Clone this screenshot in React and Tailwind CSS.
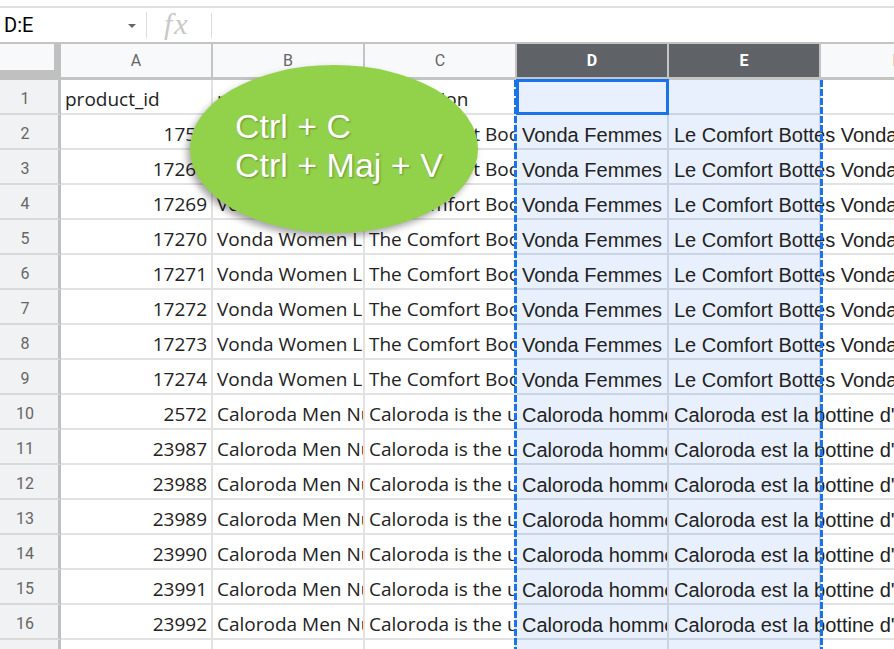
const rows = [
  ["product_id", "name", "description", "", ""],
  ["1755", "Vonda Women Leather Boots", "The Comfort Boots by Vonda", "Vonda Femmes cuir Bottes", "Le Comfort Bottes Vonda Femmes"],
  ["17268", "Vonda Women Leather Boots", "The Comfort Boots by Vonda", "Vonda Femmes cuir Bottes", "Le Comfort Bottes Vonda Femmes"],
  ["17269", "Vonda Women Leather Boots", "The Comfort Boots by Vonda", "Vonda Femmes cuir Bottes", "Le Comfort Bottes Vonda Femmes"],
  ["17270", "Vonda Women Leather Boots", "The Comfort Boots by Vonda", "Vonda Femmes cuir Bottes", "Le Comfort Bottes Vonda Femmes"],
  ["17271", "Vonda Women Leather Boots", "The Comfort Boots by Vonda", "Vonda Femmes cuir Bottes", "Le Comfort Bottes Vonda Femmes"],
  ["17272", "Vonda Women Leather Boots", "The Comfort Boots by Vonda", "Vonda Femmes cuir Bottes", "Le Comfort Bottes Vonda Femmes"],
  ["17273", "Vonda Women Leather Boots", "The Comfort Boots by Vonda", "Vonda Femmes cuir Bottes", "Le Comfort Bottes Vonda Femmes"],
  ["17274", "Vonda Women Leather Boots", "The Comfort Boots by Vonda", "Vonda Femmes cuir Bottes", "Le Comfort Bottes Vonda Femmes"],
  ["2572", "Caloroda Men Nubuck Boots", "Caloroda is the ultimate boot", "Caloroda hommes bottes", "Caloroda est la bottine d'hiver ultime"],
  ["23987", "Caloroda Men Nubuck Boots", "Caloroda is the ultimate boot", "Caloroda hommes bottes", "Caloroda est la bottine d'hiver ultime"],
  ["23988", "Caloroda Men Nubuck Boots", "Caloroda is the ultimate boot", "Caloroda hommes bottes", "Caloroda est la bottine d'hiver ultime"],
  ["23989", "Caloroda Men Nubuck Boots", "Caloroda is the ultimate boot", "Caloroda hommes bottes", "Caloroda est la bottine d'hiver ultime"],
  ["23990", "Caloroda Men Nubuck Boots", "Caloroda is the ultimate boot", "Caloroda hommes bottes", "Caloroda est la bottine d'hiver ultime"],
  ["23991", "Caloroda Men Nubuck Boots", "Caloroda is the ultimate boot", "Caloroda hommes bottes", "Caloroda est la bottine d'hiver ultime"],
  ["23992", "Caloroda Men Nubuck Boots", "Caloroda is the ultimate boot", "Caloroda hommes bottes", "Caloroda est la bottine d'hiver ultime"],
  ["", "", "", "", ""],
];

function Row({ n, cells }) {
  const numeric = /^\d+$/.test(cells[0]);
  return (
    <div className="flex h-[35px] shrink-0">
      <div className="w-[61px] shrink-0 h-full border-r-[3px] border-b-2 border-r-[#c0c0c0] border-b-[#d9d9d9] bg-[#f1f2f4] flex items-center justify-center pr-[8px] pt-[4px] text-[16px] text-[#666] font-['Roboto',sans-serif]">
        {n}
      </div>
      <div className={`w-[152px] shrink-0 h-full border-r-2 border-b-2 border-[#e2e2e2] overflow-hidden whitespace-nowrap flex items-end leading-[22px] pb-[3px] px-[4px] font-['Open_Sans',sans-serif] text-[19px] text-[#222] ${numeric ? "justify-end" : "justify-start"}`}>
        {cells[0]}
      </div>
      <div className="w-[152px] shrink-0 h-full border-r-2 border-b-2 border-[#e2e2e2] overflow-hidden whitespace-nowrap flex items-end leading-[22px] pb-[3px] px-[4px] font-['Open_Sans',sans-serif] text-[19px] text-[#222]">
        {cells[1]}
      </div>
      <div className="w-[152px] shrink-0 h-full border-r-2 border-b-2 border-[#e2e2e2] overflow-hidden whitespace-nowrap flex items-end leading-[22px] pb-[3px] px-[4px] font-['Open_Sans',sans-serif] text-[19px] text-[#222]">
        {cells[2]}
      </div>
      <div className="w-[152px] shrink-0 h-full border-r-2 border-b-2 border-[#c9d3e1] bg-[#e8f0fe] overflow-hidden whitespace-nowrap flex items-end leading-[20px] pb-[3px] pl-[5px] font-['Liberation_Sans',Arial,sans-serif] text-[20px] text-[#222]">
        {cells[3]}
      </div>
      <div className="w-[152px] shrink-0 h-full border-r-2 border-b-2 border-[#c9d3e1] bg-[#e8f0fe] overflow-visible whitespace-nowrap flex items-end leading-[20px] pb-[3px] pl-[5px] font-['Liberation_Sans',Arial,sans-serif] text-[20px] text-[#222]">
        {cells[4]}
      </div>
      <div className="w-[152px] shrink-0 h-full border-b-2 border-[#e2e2e2]" />
    </div>
  );
}

export default function App() {
  return (
    <div className="relative w-[894px] h-[649px] overflow-hidden bg-white font-['Roboto',sans-serif]">
      {/* top line */}
      <div className="h-[8px] border-b-2 border-[#e0e0e0]" />
      {/* formula bar */}
      <div className="flex items-center h-[36px] border-b-2 border-[#c4c4c4]">
        <div className="w-[146px] shrink-0 flex items-center pl-[4px] pr-[10px] text-[20px] text-black">
          <span>D:E</span>
          <span className="ml-auto w-0 h-0 border-l-[4px] border-r-[4px] border-t-[4px] border-l-transparent border-r-transparent border-t-[#666] mt-[2px]" />
        </div>
        <div className="w-px h-[26px] bg-[#dadce0] shrink-0" />
        <div className="w-[64px] shrink-0 flex items-center pl-[17px] font-['Liberation_Serif',serif] italic text-[30px] text-[#c8c8c8] tracking-[2px] leading-none pb-[2px]">
          fx
        </div>
        <div className="w-px h-[25px] bg-[#dadce0] shrink-0" />
      </div>
      {/* column headers */}
      <div className="flex h-[36px]">
        <div className="w-[61px] shrink-0 h-full bg-[#f8f9fa] border-r-[7px] border-b-[10px] border-[#c0c0c0]" />
        {["A", "B", "C"].map((c) => (
          <div key={c} className="w-[152px] shrink-0 h-full bg-[#f8f9fa] border-r-2 border-b-[3px] border-[#c4c4c4] flex items-center justify-center pt-[1px] text-[16px] text-[#666]">
            {c}
          </div>
        ))}
        {["D", "E"].map((c) => (
          <div key={c} className="w-[152px] shrink-0 h-full bg-[#5f6368] border-r-2 border-b-[3px] border-[#c4c4c4] flex items-center justify-center pt-[1px] text-[16px] font-bold text-white">
            {c}
          </div>
        ))}
        <div className="w-[152px] shrink-0 h-full bg-[#f8f9fa] border-b-[3px] border-[#c4c4c4] flex items-center justify-center pt-[1px] text-[16px] text-[#666]">
          F
        </div>
      </div>
      {/* rows */}
      <div className="flex flex-col">
        {rows.map((r, i) => (
          <Row key={i} n={i + 1} cells={r} />
        ))}
      </div>

      {/* selection dashed borders */}
      <div className="absolute left-[514px] top-[80px] w-[3px] h-[569px] [background-image:repeating-linear-gradient(to_bottom,#1a73e8_0px,#1a73e8_7px,transparent_7px,transparent_9px)]" />
      <div className="absolute left-[820px] top-[80px] w-[3px] h-[569px] [background-image:repeating-linear-gradient(to_bottom,#1a73e8_0px,#1a73e8_7px,transparent_7px,transparent_9px)]" />
      {/* active cell */}
      <div className="absolute left-[516px] top-[79px] w-[153px] h-[36px] border-[3px] border-[#1a73e8]" />

      {/* green ellipse */}
      <div className="absolute left-[190px] top-[65px] w-[288px] h-[168px] rounded-[50%] bg-[#92d14a] shadow-[-3px_4px_7px_rgba(0,0,0,0.35)] flex flex-col items-start pl-[45px] pt-[42px] font-['Liberation_Sans',Arial,sans-serif] text-[34px] leading-[39px] text-white [text-shadow:1px_1px_2px_rgba(0,0,0,0.3)]">
        <div className="whitespace-nowrap">Ctrl + C</div>
        <div className="whitespace-nowrap">Ctrl + Maj + V</div>
      </div>
    </div>
  );
}
